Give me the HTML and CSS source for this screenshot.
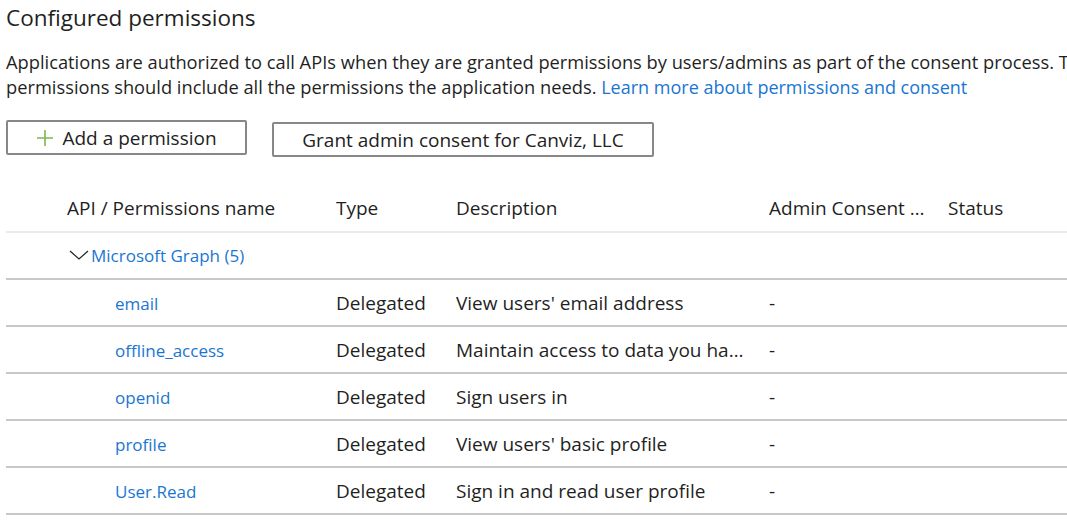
FILE: index.html
```html
<!DOCTYPE html>
<html lang="en">
<head>
<meta charset="utf-8">
<title>Configured permissions</title>
<link rel="stylesheet" href="styles.css">
</head>
<body>
<div class="page">
  <h1 class="title">Configured permissions</h1>
  <p class="intro">Applications are authorized to call APIs when they are granted permissions by users/admins as part of the consent process. The list of configured<br>permissions should include all the permissions the application needs. <a class="link" href="#">Learn more about permissions and consent</a></p>
  <div class="actions">
    <button class="btn btn-add"><svg class="plus" width="18" height="18" viewBox="0 0 18 18"><path d="M9 1v16M1 9h16" stroke="#7db84f" stroke-width="1.6" fill="none"/></svg>Add a permission</button>
    <button class="btn btn-grant">Grant admin consent for Canviz, LLC</button>
  </div>
  <div class="table">
    <div class="row head">
      <div class="c name">API / Permissions name</div>
      <div class="c type">Type</div>
      <div class="c desc">Description</div>
      <div class="c admin">Admin Consent Required</div>
      <div class="c status">Status</div>
    </div>
    <div class="row group">
      <div class="c group-cell"><svg class="chev" width="20" height="10" viewBox="0 0 20 10"><path d="M1 1l9 8 9-8" stroke="#222" stroke-width="1.2" fill="none"/></svg><a class="link" href="#">Microsoft Graph (5)</a></div>
    </div>
    <div class="row">
      <div class="c name sub"><a class="link" href="#">email</a></div>
      <div class="c type">Delegated</div>
      <div class="c desc">View users' email address</div>
      <div class="c admin">-</div>
      <div class="c status"></div>
    </div>
    <div class="row">
      <div class="c name sub"><a class="link" href="#">offline_access</a></div>
      <div class="c type">Delegated</div>
      <div class="c desc">Maintain access to data you have given it access to</div>
      <div class="c admin">-</div>
      <div class="c status"></div>
    </div>
    <div class="row">
      <div class="c name sub"><a class="link" href="#">openid</a></div>
      <div class="c type">Delegated</div>
      <div class="c desc">Sign users in</div>
      <div class="c admin">-</div>
      <div class="c status"></div>
    </div>
    <div class="row">
      <div class="c name sub"><a class="link" href="#">profile</a></div>
      <div class="c type">Delegated</div>
      <div class="c desc">View users' basic profile</div>
      <div class="c admin">-</div>
      <div class="c status"></div>
    </div>
    <div class="row">
      <div class="c name sub"><a class="link" href="#">User.Read</a></div>
      <div class="c type">Delegated</div>
      <div class="c desc">Sign in and read user profile</div>
      <div class="c admin">-</div>
      <div class="c status"></div>
    </div>
  </div>
</div>
</body>
</html>
```
FILE: styles.css
```css
html, body {
  margin: 0;
  padding: 0;
  background: #fff;
  overflow: hidden;
}
body {
  font-family: "Open Sans", "Noto Sans", sans-serif;
  color: #1f1f1f;
}
.page {
  padding: 0 0 0 6px;
  width: 1061px;
  overflow: hidden;
}
.title {
  font-size: 22.5px;
  font-weight: 400;
  margin: 0;
  padding-top: 3px;
  line-height: 30px;
  color: #1f1f1f;
}
.intro {
  margin: 16px 0 0 0;
  font-size: 18.3px;
  line-height: 25px;
  white-space: nowrap;
}
.link {
  color: #1a76d2;
  text-decoration: none;
}
.intro .link { font-size: 18px; }
.actions {
  display: flex;
  gap: 25px;
  margin-top: 20px;
  align-items: flex-start;
}
.btn {
  font-family: inherit;
  font-size: 19px;
  color: #222;
  background: #fff;
  border: 2px solid #878787;
  border-radius: 2px;
  height: 35px;
  display: flex;
  align-items: center;
  justify-content: center;
  padding: 0;
}
.btn-add { width: 241px; gap: 8px; }
.btn-grant { width: 382px; margin-top: 2px; }
.plus { flex: none; }
.table {
  margin-top: 27px;
}
.row {
  display: grid;
  grid-template-columns: 330px 120px 313px 179px 1fr;
  height: 45px;
  align-items: center;
  border-bottom: 2px solid #c8c8c8;
  font-size: 19px;
}
.row .link { font-size: 17px; }
.row.head {
  height: 47px;
  border-bottom-color: #ebebeb;
}
.c {
  white-space: nowrap;
  overflow: hidden;
  text-overflow: ellipsis;
}
.name { padding-left: 61px; }
.name.sub { padding-left: 109px; }
.desc { padding-right: 22px; }
.admin { padding-right: 18px; }
.group {
  grid-template-columns: 1fr;
}
.group-cell {
  padding-left: 63px;
  display: flex;
  align-items: center;
  gap: 2px;
}
.chev { flex: none; margin-top: -2px; }
```
